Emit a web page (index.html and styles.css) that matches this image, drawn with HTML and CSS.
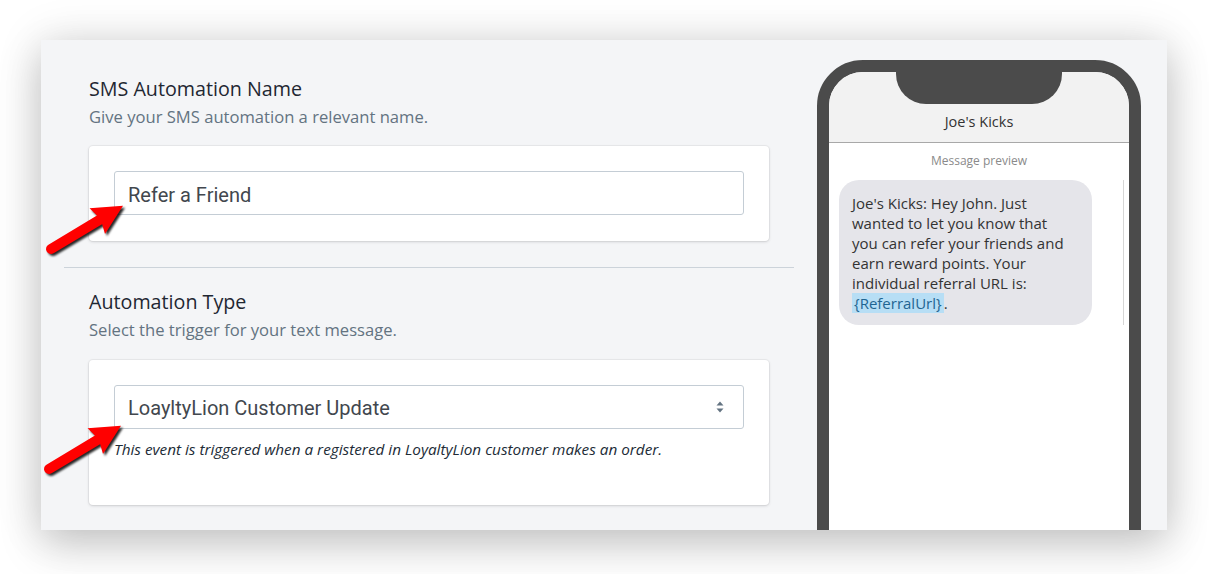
FILE: index.html
```html
<!DOCTYPE html>
<html>
<head>
<meta charset="utf-8">
<link rel="stylesheet" href="styles.css">
</head>
<body>
<div class="frame">
  <div class="form-col">
    <section class="section first">
      <h2 class="title">SMS Automation Name</h2>
      <p class="subtitle">Give your SMS automation a relevant name.</p>
      <div class="card card-name">
        <svg class="pointer pointer-1" width="110" height="80" viewBox="0 0 110 80">
          <g transform="translate(20 61) rotate(-31)">
            <line x1="0" y1="0" x2="60" y2="0" stroke="#f00" stroke-width="10" stroke-linecap="round"/>
            <polygon points="84,0 54,-15 58,0 54,15" fill="#f00"/>
          </g>
        </svg>
        <div class="control">Refer a Friend</div>
      </div>
    </section>
    <hr class="divider">
    <section class="section second">
      <h2 class="title">Automation Type</h2>
      <p class="subtitle">Select the trigger for your text message.</p>
      <div class="card card-type">
        <svg class="pointer pointer-2" width="110" height="80" viewBox="0 0 110 80">
          <g transform="translate(20 61) rotate(-31)">
            <line x1="0" y1="0" x2="60" y2="0" stroke="#f00" stroke-width="10" stroke-linecap="round"/>
            <polygon points="84,0 54,-15 58,0 54,15" fill="#f00"/>
          </g>
        </svg>
        <div class="control select">
          <span>LoayltyLion Customer Update</span>
          <svg class="updown" width="10" height="14" viewBox="0 0 10 14">
            <path d="M5 1.5 L8.5 5.5 H1.5 Z" fill="#637381"/>
            <path d="M5 12.5 L8.5 8.5 H1.5 Z" fill="#637381"/>
          </svg>
        </div>
        <p class="help">This event is triggered when a registered in LoyaltyLion customer makes an order.</p>
      </div>
    </section>
  </div>
  <div class="phone-col">
    <div class="phone">
      <div class="notch"></div>
      <div class="phone-head">Joe's Kicks</div>
      <div class="phone-body">
        <div class="preview-label">Message preview</div>
        <div class="thread">
          <div class="bubble">Joe's Kicks: Hey John. Just<br>wanted to let you know that<br>you can refer your friends and<br>earn reward points. Your<br>individual referral URL is:<br><span class="token">{ReferralUrl}</span>.</div>
        </div>
      </div>
    </div>
  </div>
</div>
</body>
</html>
```

FILE: styles.css
```css
* { box-sizing: border-box; }
html, body { margin: 0; padding: 0; background: #ffffff; }
body { font-family: "Open Sans", "Noto Sans", sans-serif; padding-bottom: 44px; }

.frame {
  margin: 40px 0 0 41px;
  width: 1126px;
  height: 490px;
  background: #f4f5f7;
  box-shadow: 0 0 44px rgba(0, 0, 0, 0.12), 0 16px 40px rgba(0, 0, 0, 0.18);
  overflow: hidden;
  display: flex;
  gap: 23px;
  padding: 0 26px 0 23px;
}

.form-col { width: 730px; flex: none; }

.section { padding: 0 25px; }
.section.first { padding-top: 37px; }
.section.second { padding-top: 22px; }

.title {
  margin: 0;
  font-size: 19.7px;
  line-height: 24px;
  font-weight: 500;
  color: #1f2732;
}
.subtitle {
  margin: 4px 0 0;
  font-size: 16.6px;
  line-height: 24px;
  color: #637381;
}

.card {
  position: relative;
  background: #fff;
  border-radius: 4px;
  box-shadow: 0 0 0 1px rgba(63, 63, 68, 0.05), 0 1px 3px rgba(63, 63, 68, 0.18);
  padding: 25px 25px 26px;
}
.card-name { margin-top: 17px; }
.card-type { margin-top: 18px; padding-bottom: 46px; }

.control {
  height: 44px;
  border: 1px solid #c4cdd5;
  border-radius: 3px;
  background: #fff;
  padding: 3px 13px 0;
  display: flex;
  align-items: center;
  font-family: Roboto, "Noto Sans", sans-serif;
  font-size: 20px;
  color: #42474e;
}
.select { justify-content: space-between; padding-right: 18px; padding-top: 2px; }
.updown { display: block; margin-top: -2px; }

.help {
  margin: 10px 0 0;
  font-size: 15.3px;
  line-height: 20px;
  font-style: italic;
  color: #212b36;
}

.divider {
  margin: 26px 0 0;
  border: 0;
  border-top: 1px solid #ccd3da;
  height: 0;
}

.pointer {
  position: absolute;
  left: -58px;
  filter: drop-shadow(2px 2px 1.3px rgba(0, 0, 0, 0.85));
}
.pointer-1 { top: 42px; }
.pointer-2 { top: 48px; left: -60px; }

.phone-col { width: 324px; flex: none; padding-top: 20px; }
.phone {
  position: relative;
  width: 324px;
  height: 540px;
  border: 12px solid #4b4b4b;
  border-radius: 46px;
  background: #fff;
  overflow: hidden;
  font-family: "Open Sans", "Noto Sans", sans-serif;
}
.notch {
  position: absolute;
  top: 0;
  left: 67px;
  width: 166px;
  height: 32px;
  background: #4b4b4b;
  border-radius: 0 0 30px 30px;
}
.phone-head {
  height: 71px;
  background: #f2f2f2;
  border-bottom: 1px solid #a8a8a8;
  padding-top: 40px;
  text-align: center;
  font-size: 14.5px;
  line-height: 20px;
  color: #333;
}
.phone-body { padding-top: 9px; }
.preview-label {
  text-align: center;
  font-size: 12px;
  line-height: 18px;
  color: #8a8a8a;
}
.thread {
  margin: 10px 5px 0 10px;
  border-right: 1px solid #d6d6d6;
}
.bubble {
  width: 253px;
  background: #e5e5ea;
  border-radius: 20px;
  padding: 13px 10px 12px 13px;
  font-size: 15px;
  line-height: 20px;
  color: #333;
  white-space: nowrap;
}
.token {
  background: #b7def5;
  color: #1f6592;
  padding: 0 2px;
}
```
